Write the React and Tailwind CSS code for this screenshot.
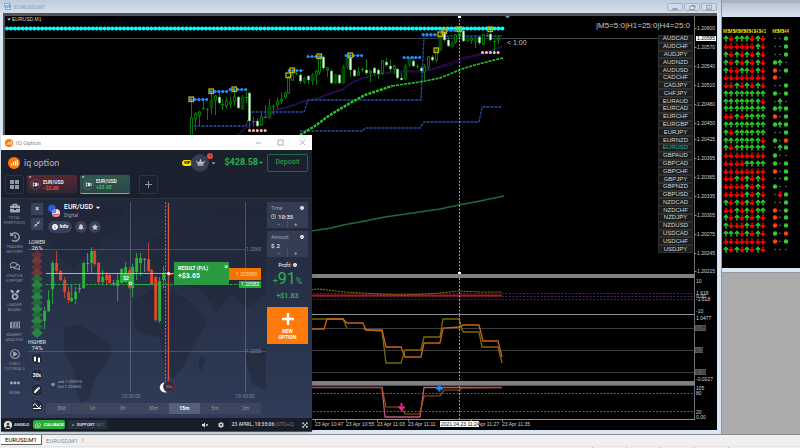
import React from 'react';
import {
  FaBriefcase, FaHistory, FaRegComments, FaMedal, FaRegNewspaper, FaRegPlayCircle, FaEllipsisH,
  FaBell, FaStar, FaCrown, FaCaretDown, FaPen, FaCog, FaVolumeMute, FaWhatsapp, FaInfoCircle, FaRegClock, FaExpandArrowsAlt,
} from 'react-icons/fa';

const PAIRS = [
  ['AUDCAD', 'UDUUUDUD', '..g'], ['AUDCHF', 'DDDDDDUD', '..g'], ['AUDJPY', 'UDUDUDUD', '..g'],
  ['AUDNZD', 'UDUDUDUD', 'gU.'], ['AUDUSD', 'UDDUUDUD', 'o.g'], ['CADCHF', 'DDDDDDDD', 'o. '],
  ['CADJPY', 'DDUDUDUD', '..g'], ['CHFJPY', 'UUUUUUUU', 'g.g'], ['EURAUD', 'UUUUUUUD', '.U.'],
  ['EURCAD', 'UUUUUUUU', 'gUg'], ['EURCHF', 'DDUDUUUU', 'o.g'], ['EURGBP', 'UUUUUUUU', 'gUg'],
  ['EURJPY', 'UDUUUUUU', '..g'], ['EURNZD', 'UUUUUUUD', 'g.o'], ['EURUSD', 'UDUUUUUU', '.Ug'],
  ['GBPAUD', 'DDDDDDDD', 'g..'], ['GBPCAD', 'DDDDUUUU', 'g.g'], ['GBPCHF', 'DDDDDDDD', 'o.g'],
  ['GBPJPY', 'DDUDUDUD', '..g'], ['GBPNZD', 'DDDDUDUD', 'g..'], ['GBPUSD', 'DDDDUDUD', '.Dg'],
  ['NZDCAD', 'UDUDUDUU', '..g'], ['NZDCHF', 'DDUDUDUU', 'o.g'], ['NZDJPY', 'UDUDUDUD', 'o.g'],
  ['NZDUSD', 'UDDDUDUD', 'o.g'], ['USDCAD', 'UUUDUDUD', 'g.o'], ['USDCHF', 'DDDDDDDD', 'o.g'],
  ['USDJPY', 'UDUDUDUD', '...'],
];

/* [x, body top, body bottom, wick top, wick bottom, kind]; w = bear, h = hollow bull, d = dark bull, t = doji */
const CANDLES = [
  [191, 118, 137, 100, 137, 'h'], [195, 114, 119, 112, 130, 'h'], [199, 112, 115, 111, 126, 'h'], [203, 108, 108, 100, 110, 't'],
  [207, 109, 109, 108, 120, 't'], [211, 100, 108, 92, 114, 'd'], [215, 96, 100, 95, 115, 'h'], [219, 97, 103, 93, 104, 'w'],
  [222, 104, 104, 99, 110, 't'], [226, 101, 106, 97, 109, 'h'], [230, 102, 104, 97, 108, 'h'], [234, 97, 101, 90, 106, 'h'],
  [238, 97, 108, 96, 109, 'w'], [242, 97, 109, 95, 110, 'd'], [246, 97, 97, 92, 103, 't'], [249, 93, 121, 92, 130, 'w'],
  [253, 121, 121, 117, 127, 't'], [257, 121, 126, 118, 127, 'w'], [261, 117, 125, 113, 126, 'h'], [265, 117, 117, 105, 117, 't'],
  [269, 106, 118, 99, 119, 'd'], [273, 106, 106, 105, 115, 't'], [277, 101, 105, 97, 109, 'h'], [281, 99, 101, 92, 104, 'h'],
  [285, 93, 97, 92, 99, 'h'], [288, 78, 93, 76, 94, 'h'], [292, 75, 80, 71, 81, 'h'], [296, 73, 73, 72, 75, 't'],
  [300, 75, 81, 73, 84, 'w'], [304, 78, 82, 77, 84, 'd'], [308, 76, 80, 75, 84, 'w'], [312, 75, 81, 73, 85, 'd'],
  [316, 71, 75, 70, 85, 'h'], [319, 57, 72, 55, 75, 'h'], [323, 57, 68, 56, 70, 'w'], [327, 68, 70, 67, 77, 'h'],
  [331, 71, 83, 69, 84, 'w'], [335, 75, 83, 74, 84, 'd'], [339, 75, 83, 74, 84, 'w'], [343, 67, 83, 65, 84, 'd'],
  [347, 58, 67, 56, 69, 'd'], [350, 58, 70, 55, 77, 'w'], [354, 70, 76, 69, 77, 'w'], [358, 72, 75, 67, 76, 'h'],
  [362, 69, 69, 67, 72, 't'], [366, 70, 73, 59, 75, 'w'], [370, 71, 73, 70, 82, 'h'], [374, 68, 73, 67, 75, 'w'],
  [378, 70, 74, 68, 79, 'w'], [382, 61, 73, 60, 75, 'h'], [386, 62, 65, 58, 67, 'w'], [390, 66, 69, 60, 72, 'w'],
  [394, 66, 69, 65, 74, 'h'], [397, 69, 78, 68, 79, 'w'], [401, 78, 80, 73, 80, 'w'], [405, 66, 79, 64, 80, 'd'],
  [409, 59, 65, 57, 67, 'd'], [413, 61, 66, 56, 67, 'w'], [417, 66, 66, 64, 69, 't'], [421, 68, 71, 66, 73, 'w'],
  [424, 67, 72, 64, 81, 'h'], [428, 57, 67, 56, 70, 'h'], [432, 57, 60, 55, 62, 'w'], [436, 50, 60, 48, 62, 'h'],
  [440, 35, 50, 33, 51, 'd'], [444, 32, 40, 31, 42, 'w'], [448, 40, 46, 37, 47, 'w'], [452, 43, 46, 41, 47, 'd'],
  [455, 35, 42, 34, 44, 'h'], [459, 30, 36, 29, 41, 'h'], [463, 31, 41, 30, 42, 'w'], [467, 38, 41, 36, 42, 'd'],
  [471, 38, 40, 37, 44, 'h'], [475, 38, 42, 36, 48, 'd'], [479, 37, 43, 36, 45, 'w'], [483, 35, 44, 34, 45, 'h'],
  [487, 35, 35, 33, 37, 't'], [490, 34, 40, 29, 41, 'w'], [494, 41, 41, 38, 52, 't'], [498, 38, 40, 36, 44, 'h'],
];

const DOT_RUNS = [
  [191, 207, 99], [211, 227, 91], [230, 246, 89], [289, 304, 70], [308, 323, 56],
  [346, 362, 55], [404, 421, 57], [423, 438, 34], [443, 458, 30],
];
const SQUARES = [[191, 99], [211, 91], [234, 89], [288, 75], [292, 70], [319, 56], [350, 55], [436, 50], [440, 34], [444, 31], [459, 29], [490, 29]];

const PRICES = [
  ['1.20600', 28], ['1.20570', 47], ['1.20540', 66], ['1.20510', 85], ['1.20480', 104], ['1.20450', 123], ['1.20425', 139],
  ['1.20395', 158], ['1.20365', 177], ['1.20335', 196], ['1.20305', 215], ['1.20275', 234], ['1.20245', 253], ['1.20215', 271],
];

function Candle({ c }) {
  const [x, t, b, wt, wb, k] = c;
  return (
    <g>
      <path d={`M${x + 0.5} ${wt}V${wb}`} stroke="#007d00" strokeWidth="1" />
      {k === 'w' && <rect x={x - 0.8} y={t} width="2.6" height={b - t} fill="#eafbea" stroke="#1d7a1d" strokeWidth="0.4" />}
      {k === 'h' && <rect x={x - 0.6} y={t} width="2.2" height={b - t} fill="#000" stroke="#008a00" strokeWidth="0.9" />}
      {k === 'd' && <rect x={x - 1} y={t} width="3" height={b - t} fill="#024802" stroke="#006000" strokeWidth="0.6" />}
      {k === 't' && <rect x={x - 0.8} y={t} width="2.6" height="1" fill="#00a000" />}
    </g>
  );
}

function Crosshair({ from, to }) {
  return <path d={`M459.5 ${from}V${to}`} stroke="#a0a0a0" strokeWidth="1" strokeDasharray="2 1.5" />;
}

function PriceChart() {
  const upper = '194,126 246,126 251,112 304,112 308,100 421,100 424,36 502,36';
  const lower = '300,131 363,131 365,128 420,128 424,122 479,122 482,107 502,107';
  return (
    <svg className="h-full w-full" viewBox="5 16 690 258" preserveAspectRatio="xMinYMin slice" fill="none">
      <path d="M5 38.5H658" stroke="#3c474d" />
      <polyline points="237,135 250,124 265,117 278,109 290,106 303,101 318,98 330,93 343,89 352,82 365,77 378,74 392,72 405,71 422,71 435,68 450,63 462,58 480,54 492,50 502,46" stroke="#4a0a44" />
      <polyline points="237,136 250,125 265,118 278,110 290,107 303,102 318,99 330,94 343,90 352,83 365,78 378,75 392,73 405,72 422,72 435,69 450,65 462,60 480,55 492,51 502,47" stroke="#10107a" />
      {[upper, lower].map((p) => (
        <g key={p}>
          <polyline points={p} stroke="#162e66" />
          <polyline points={p} stroke="#264c9c" strokeWidth="1.4" strokeDasharray="2 2" />
        </g>
      ))}
      <polyline points="300,135 315,126 327,117 340,109 352,102 365,95 380,90 392,86" stroke="#2cc42c" strokeWidth="2.4" strokeDasharray="3 1" />
      <polyline points="392,86 405,84 420,82 430,80 440,78 450,74 462,69 475,65 490,61 503,58" stroke="#2cc42c" strokeWidth="1.6" strokeDasharray="3 1" />
      <polyline points="311,231 331,228 343,225 360,222 385,217 440,209 459,205 480,201 504,196" stroke="#1d6b3e" strokeWidth="1.3" />
      {CANDLES.map((c) => <Candle key={c[0]} c={c} />)}
      <path d="M6 28.5H503" stroke="#00b4b4" strokeWidth="1.5" />
      <path d="M7 28.5H503" stroke="#00ffff" strokeWidth="4" strokeLinecap="round" strokeDasharray="0.1 3.8" />
      {DOT_RUNS.map(([a, b, y]) => (
        <g key={a}>
          <path d={`M${a} ${y + 0.5}H${b}`} stroke="#12508c" />
          <path d={`M${a} ${y + 0.5}H${b}`} stroke="#1e90ff" strokeWidth="3" strokeLinecap="round" strokeDasharray="0.1 3.8" />
        </g>
      ))}
      <path d="M249.500 130.500H266M482.500 52.500H500" stroke="#ffb6b6" strokeWidth="3" strokeLinecap="round" strokeDasharray="0.1 3.8" />
      {SQUARES.map(([x, y]) => <rect key={x} x={x - 2} y={y - 2} width="4.500" height="4.500" stroke="#c8b400" strokeWidth="1.300" />)}
      <Crosshair from={16} to={274} />
      <path d="M458 16h3v2h-3zM458 272h3v2h-3z" fill="#fff" />
      <path d="M505 16h5l-2.500 2.500z" fill="#8090a0" />
      <path d="M7 18.500h4l-2 2z" fill="#d0d0d0" />
      <text x="12" y="21" fontSize="5" fill="#d8d8d8">EURUSD,M1</text>
      <text x="507" y="45" fontSize="7" fill="#c0c0c0">&lt; 1:00</text>
      <text x="690" y="28" fontSize="8" textAnchor="end" fill="#c8c8c8">|M5=5:0|H1=25:0|H4=25:0</text>
    </svg>
  );
}

function Scale({ top, height, labels, boxes = [], current }) {
  return (
    <svg className="h-full w-[23px] shrink-0" viewBox={`694 ${top} 23 ${height}`} fontSize="5" fill="#d0d0d0">
      <path d={`M694.500 ${top}V${top + height}`} stroke="#707070" />
      {boxes.map(([t, y, w]) => (
        <g key={y}>
          <rect x="695" y={y - 3} width={w} height="6" fill="#5a5a5a" />
          <text x="696" y={y + 2} fill="#1a1a1a">{t}</text>
        </g>
      ))}
      {labels.map(([t, y]) => (
        <g key={y}>
          {top === 16 && <path d={`M695 ${y + 0.5}h1.500`} stroke="#909090" />}
          <text x={top === 16 ? 697 : 696} y={y + 2}>{t}</text>
        </g>
      ))}
      {current && (
        <g>
          <rect x="696" y="36" width="20" height="5" fill="#fff" />
          <text x="697" y="40" fill="#000">1.20585</text>
        </g>
      )}
    </svg>
  );
}

function TrendChart() {
  return (
    <svg className="h-full w-full" viewBox="5 278 690 36" preserveAspectRatio="xMinYMin slice" fill="none">
      <path d="M5 293.500H695M5 296.500H695M5 299.500H695" stroke="#4a2058" strokeDasharray="2 1.500" />
      <path d="M311 295.500H502" stroke="#a81428" strokeWidth="2" />
      <polyline points="311,290 318,289 327,290 345,292 360,293 380,294 400,295 425,294 440,293 459,291 480,292 502,292" stroke="#8c8200" strokeDasharray="2 1" />
      <Crosshair from={278} to={314} />
    </svg>
  );
}

function StochChart() {
  return (
    <svg className="h-full w-full" viewBox="5 315 690 66" preserveAspectRatio="xMinYMin slice" fill="none">
      <path d="M5 328.500H695M5 350.500H695M5 372.500H695" stroke="#3c3c3c" />
      <polyline points="311,319 343,319 347,328" stroke="#7d6a00" strokeWidth="1.300" />
      <polyline points="363,328 366,330 382,331 386,363 401,363 405,350 421,350 424,337 440,337 443,319 459,319 463,332 479,332 482,347 498,347 502,363" stroke="#7d6a00" strokeWidth="1.300" />
      <polyline points="311,329 324,329 327,319 343,319 347,323 363,323 366,330 382,330 386,347 401,347 405,357 421,357 424,343 440,343 443,328 460,327 463,325 479,325 483,341 498,341 502,357" stroke="#c8641a" strokeWidth="1.300" />
      <Crosshair from={315} to={381} />
    </svg>
  );
}

function SignalChart() {
  return (
    <svg className="h-full w-full" viewBox="5 386 690 33" preserveAspectRatio="xMinYMin slice" fill="none">
      <path d="M5 393.500H695M5 411.500H695" stroke="#606060" strokeDasharray="2 1.500" />
      <polyline points="311,387.500 382,387.500 385,417 420,417 424,387.500 502,387.500" stroke="#c05878" strokeWidth="1.300" />
      <polyline points="311,387.500 382,387.500 386,407 401,407 405,414 420,414 424,396 440,396 444,390 459,390 462,388 502,387.500" stroke="#a0560c" strokeWidth="1.200" />
      <path d="M401.500 403v7M398.500 406.500l3 3 3-3" stroke="#ff1493" strokeWidth="2" />
      <path d="M439.500 391.500v-4M436.500 389.500l3-3 3 3" stroke="#1e90ff" strokeWidth="2" />
      <Crosshair from={386} to={419} />
    </svg>
  );
}

function TimeAxis() {
  const ticks = [[315, '23 Apr 10:47'], [346, '23 Apr 10:55'], [377, '23 Apr 11:03'], [408, '23 Apr 11:11'], [471, '23 Apr 11:27'], [502, '23 Apr 11:35']];
  return (
    <svg className="h-full w-full" viewBox="5 420 690 10" preserveAspectRatio="xMinYMin slice" fontSize="5" fill="#d0d0d0">
      {ticks.map(([x, t]) => (
        <g key={x}>
          <path d={`M${x + 0.5} 420v1.500`} stroke="#909090" />
          <text x={x} y="426">{t}</text>
        </g>
      ))}
      <rect x="440" y="421" width="39" height="6" fill="#fff" />
      <text x="441" y="426" fill="#101010">2021.04.23 11:24</text>
    </svg>
  );
}

function WindowControls() {
  const shapes = ['M3 6h6v1H3z', 'M3 3h6v4H3zM5 2h5v3', 'M3 2h6v5H3zM5 4l2 2M7 4l-2 2'];
  return (
    <div className="flex gap-px">
      {shapes.map((d, i) => (
        <button key={d} aria-label={['Minimize', 'Restore', 'Close'][i]} className="h-2 w-4 rounded-xs border border-[#a3b2c2] bg-[#cfdce8]">
          <svg className="mx-auto h-[7px] w-3" viewBox="0 0 12 9" fill="#e8eef4" stroke="#7b8794"><path d={d} /></svg>
        </button>
      ))}
    </div>
  );
}

function ChartWindow() {
  return (
    <section className="absolute inset-y-0 left-0 flex w-[722px] flex-col border-r border-[#8a97a5] bg-[#d9e6f4]">
      <header className="flex h-[13px] shrink-0 items-center gap-[3px] bg-linear-to-b from-[#bfcddb] to-[#d3e0ec] pr-1 pl-1">
        <svg className="h-[7px] w-[7px]" viewBox="0 0 8 8" fill="#e8f2ff" stroke="#5d96dd"><path d="M.5.500h6v4h-6zM2 3h5.500v4.500H2zM4 6V5M6 6V4.500" /></svg>
        <h1 className="flex-1 font-['Roboto',sans-serif] text-[6px] leading-none text-[#929ca8]">EURUSD,M1</h1>
        <WindowControls />
      </header>
      <div className="mr-1 mb-1 ml-[3px] flex min-h-0 flex-1 flex-col border-t-3 border-l-2 border-[#555] bg-black">
        <div className="relative flex h-[258px] shrink-0">
          <div className="min-w-0 flex-1"><PriceChart /></div>
          <div className="absolute top-[19px] right-[24px] grid h-[218px] w-[35px] auto-rows-fr">
            {PAIRS.map(([p]) => (
              <button key={p} className={'border border-[#303030] bg-[#1c1c1c] text-[6px] leading-[5px] ' + (p === 'EURUSD' ? 'text-[#18b8b0]' : 'text-[#d4d4d4]')}>{p}</button>
            ))}
          </div>
          <Scale top={16} height={258} labels={PRICES} current />
        </div>
        <div className="mr-[22px] h-1 shrink-0 bg-[#808080]" />
        <div className="flex h-9 shrink-0">
          <div className="min-w-0 flex-1"><TrendChart /></div>
          <Scale top={278} height={36} labels={[['10', 281], ['1.618', 293], ['0.00', 296], ['-1.618', 299], ['-10', 311]]} />
        </div>
        <div className="mr-[22px] h-px shrink-0 bg-[#909090]" />
        <div className="flex h-[66px] shrink-0">
          <div className="min-w-0 flex-1"><StochChart /></div>
          <Scale top={315} height={66} labels={[['1.0477', 318], ['-0.0027', 379]]} boxes={[['0.85', 328, 11], ['0.5', 350, 8], ['0.15', 372, 11]]} />
        </div>
        <div className="mr-[22px] h-[5px] shrink-0 border-b border-[#555] bg-[#808080]" />
        <div className="flex h-[33px] shrink-0">
          <div className="min-w-0 flex-1"><SignalChart /></div>
          <Scale top={386} height={33} labels={[['105', 388], ['80', 393], ['20', 412], ['0.00', 417]]} />
        </div>
        <div className="mr-[22px] h-px shrink-0 bg-[#909090]" />
        <div className="mr-[22px] min-h-0 flex-1"><TimeAxis /></div>
      </div>
    </section>
  );
}

function Mark({ k }) {
  const arrow = 'M3 7.500V1.500M.500 4.200L3 1.500l2.500 2.700';
  return (
    <svg className="mx-auto h-[7px] w-[6px]" viewBox="0 0 6 8" fill="none" strokeWidth="1.700">
      {k === 'U' && <path d={arrow} stroke="#28c828" />}
      {k === 'D' && <path d={arrow} stroke="#ff0000" transform="rotate(180 3 4)" />}
      {k === 'g' && <circle cx="3" cy="4" r="2.500" fill="#32cd32" />}
      {k === 'o' && <circle cx="3" cy="4" r="2.500" fill="#ff4500" />}
      {k === '.' && <circle cx="3" cy="4" r="0.900" fill="#808080" />}
    </svg>
  );
}

function SignalColumns() {
  return (
    <colgroup>
      {Array.from({ length: 8 }, (_, i) => <col key={i} />)}
      <col className="w-[7px]" />
      <col /><col /><col />
    </colgroup>
  );
}

function SignalsWindow() {
  return (
    <section className="absolute top-0 right-0 left-[722px] flex h-[273px] flex-col border-b border-[#8f9aa5] bg-[#d9e6f4] pb-1">
      <header className="h-[17px] shrink-0 border-t-3 border-[#a9b4bf] bg-linear-to-b from-[#b9c7d5] to-[#d6e2ee]" />
      <div className="min-h-0 flex-1 bg-black pt-[10px] pl-px">
        <table className="w-[65px] table-fixed border-collapse">
          <SignalColumns />
          <thead>
            <tr className="h-2 text-[5px] leading-[8px] text-[#d8d000]">
              {['M5', 'M5', 'M5', 'M5', 'M5', 'H1', 'H1', 'H1', '', 'M5', 'M5', 'H4'].map((h, i) => (
                <th key={i} className="p-0 font-bold whitespace-nowrap">{h}</th>
              ))}
            </tr>
          </thead>
        </table>
        <table className="h-[218px] w-[65px] table-fixed border-collapse">
          <SignalColumns />
          <tbody>
            {PAIRS.map(([p, arrows, dots]) => (
              <tr key={p}>
                {(arrows + ' ' + dots).split('').map((k, i) => <td key={i} className="p-0"><Mark k={k} /></td>)}
              </tr>
            ))}
          </tbody>
        </table>
      </div>
    </section>
  );
}

function IqLogo({ className }) {
  return (
    <svg className={className} viewBox="0 0 24 24">
      <circle cx="12" cy="12" r="12" fill="#ff7a0c" />
      <path d="M7 17v-4M11 17v-7M15 17V8M18.500 17V6" stroke="#fff" strokeWidth="2.400" />
    </svg>
  );
}

function PositionTab({ amount, up }) {
  return (
    <button className={'relative flex h-[19px] w-[50px] items-center gap-[2px] rounded-xs pl-[3px] text-left ' + (up ? 'border-b border-[#ff8a1c] bg-linear-to-b from-[#31584f] to-[#2b4546]' : 'bg-linear-to-b from-[#5a2833] to-[#2b2531]')}>
      <svg className="h-[11px] w-[11px] shrink-0" viewBox="0 0 22 22" fill="none" stroke="#98a0a8">
        <circle cx="11" cy="11" r="10" strokeOpacity=".6" />
        <path d="M5.500 8h3l-2 3 2 3h-3M11 8h2v6h-2zM16 8v6" stroke="#fff" strokeWidth="1.700" />
      </svg>
      <span className="absolute top-0 left-[2px] text-[4px] leading-[4px] text-white">×</span>
      <span className="text-[5px] leading-[6px] font-bold text-[#e4e6ea]">
        EUR/USD
        <span className={'block ' + (up ? 'text-[#2fc45a]' : 'text-[#ee4a4a]')}>{amount}</span>
      </span>
    </button>
  );
}

const NAV = [
  [FaBriefcase, 'TOTAL PORTFOLIO'], [FaHistory, 'TRADING HISTORY'], [FaRegComments, 'CHATS & SUPPORT'], [FaMedal, 'LEADER BOARD'],
  [FaRegNewspaper, 'MARKET ANALYSIS'], [FaRegPlayCircle, 'VIDEO TUTORIALS'], [FaEllipsisH, 'MORE'],
];

/* [x, body top, body bottom, wick top, wick bottom, g | r | n] */
const IQ_CANDLES = [
  [44, 311, 321, 307, 329, 'g'], [48, 300, 311, 290, 312, 'g'], [52, 263, 289, 261, 304, 'g'], [56, 263, 271, 251, 273, 'r'],
  [60, 271, 280, 270, 281, 'r'], [64, 280, 292, 277, 298, 'r'], [68, 292, 300, 287, 303, 'r'], [71, 298, 301, 285, 302, 'g'],
  [75, 292, 299, 287, 304, 'g'], [79, 288, 289, 284, 293, 'n'], [83, 263, 288, 262, 289, 'g'], [87, 263, 264, 253, 272, 'n'],
  [91, 251, 263, 247, 273, 'g'], [94, 251, 264, 250, 266, 'r'], [98, 263, 282, 262, 284, 'r'], [102, 277, 282, 270, 284, 'g'],
  [106, 275, 280, 272, 284, 'r'], [109, 275, 283, 274, 284, 'r'], [113, 283, 284, 280, 286, 'n'], [117, 280, 286, 274, 301, 'g'],
  [121, 269, 283, 268, 284, 'g'], [125, 267, 278, 262, 280, 'g'], [129, 270, 288, 267, 289, 'r'], [132, 267, 288, 264, 297, 'g'],
  [136, 258, 272, 253, 280, 'g'], [140, 258, 263, 253, 276, 'g'], [144, 259, 260, 258, 272, 'n'], [148, 259, 271, 243, 272, 'r'],
  [151, 270, 284, 269, 285, 'r'], [155, 277, 320, 276, 322, 'r'], [159, 281, 321, 277, 323, 'g'], [163, 273, 280, 266, 288, 'g'],
];

function IqChart() {
  const color = { g: '#2cb040', r: '#e0452e', n: '#7e8796' };
  return (
    <svg className="absolute inset-0 h-full w-full" viewBox="28 199 238 219" preserveAspectRatio="xMinYMin slice" fill="none" fontSize="5">
      <g fill="#1d2536" fillOpacity=".5">
        <path d="M46 232l20-20 34-8 24 6-6 18-14 8-8 16-12 4-10 12-8-4-12-16z" />
        <path d="M64 327l18-2 14 10 14 8 2 8-7 14-10 14-6 20-8 3-5-12-2-20-10-18z" />
        <path d="M134 300l16-10 24 2 22 14 12 18-6 8-10 16-8 18-10 12-8-4-4-20-2-16-22-6-6-18z" />
        <path d="M142 262l12-24 28-18 40-16h44v90l-20 14-14-14-16 18-14-22-26-8-22-8z" />
        <path d="M200 356l6 2-4 12-4-2z" />
        <path d="M246 360v-10l20-2v42l-14-6z" />
      </g>
      <path d="M28 249.500H245M28 351.500H266" stroke="#8c95a6" strokeOpacity=".35" />
      <path d="M130.500 202V392M245.500 202V392" stroke="#a0a8b8" strokeOpacity=".35" />
      <path d="M165.500 202V388" stroke="#b8bec8" strokeOpacity=".6" strokeDasharray="2 1.500" />
      <path d="M46 284.500H262" stroke="#2bad40" strokeDasharray="2.500 1.500" />
      <path d="M130 284.500H158" stroke="#2bad40" />
      {IQ_CANDLES.map(([x, t, b, wt, wb, k]) => (
        <g key={x} fill={color[k]}>
          <rect x={x + 0.2} y={wt} width="0.900" height={wb - wt} />
          <rect x={x - 0.8} y={t} width="2.900" height={b - t} />
        </g>
      ))}
      <path d="M46 273.500H174" stroke="#c4c8d0" strokeOpacity=".85" />
      <path d="M168.500 203V383" stroke="#e2503c" strokeWidth="1.300" />
      <circle cx="168.500" cy="273.500" r="1.600" fill="#fff" />
      <path d="M170 272.500l3 1.500-3 1.500z" fill="#ff6a20" />
      <circle cx="169" cy="386.500" r="5.500" fill="#2a2f42" stroke="#703038" strokeWidth=".8" />
      <text x="169" y="388" textAnchor="middle" fontSize="4" fontWeight="700" fill="#f04a38">30s</text>
      <path d="M164.500 382.500a5 5 0 1 0 2.500 9.500a6 6 0 0 1-2.500-9.500z" fill="#fff" />
      <path d="M120 274h12v8h-5l-1 2-1-2h-5z" fill="#2bad40" />
      <text x="126" y="280" textAnchor="middle" fontWeight="700" fill="#fff">$2</text>
      <circle cx="130.500" cy="283.500" r="2.300" fill="#d8e8dc" stroke="#2bad40" strokeWidth=".8" />
      <circle cx="130.500" cy="283.500" r=".8" fill="#2bad40" />
      <text x="246" y="251" fill="#7b8496">1.2060</text>
      <text x="246" y="353" fill="#7b8496">1.2055</text>
      <g fill="#7b8496" textAnchor="middle">
        <text x="131" y="398">10:30:00</text>
        <text x="245" y="398">10:45:00</text>
      </g>
      <rect x="229" y="268" width="32" height="12" fill="#f57400" />
      <text x="236" y="276" fill="#ffd6a8">1.205880</text>
      <rect x="239" y="281" width="22" height="7" fill="#24a83c" />
      <text x="241" y="286" fill="#fff">1.20583</text>
      <circle cx="53" cy="384.500" r="1.800" fill="#8790a0" />
      <g fontSize="4" fill="#a2a9b6">
        <text x="58" y="383">ask 1.205910</text>
        <text x="58" y="388">bid 1.205850</text>
      </g>
    </svg>
  );
}

function Sentiment() {
  return (
    <svg className="h-[88px] w-[14px] shrink-0" viewBox="0 0 14 88">
      {Array.from({ length: 14 }, (_, i) => {
        const y = i * 6;
        return <path key={i} d={`M7 ${y}l6 5-6 5-6-5z`} fill={i < 4 ? (i % 2 ? '#7a3a3c' : '#693236') : (i % 2 ? '#2a8c42' : '#256f3c')} fillOpacity=".9" />;
      })}
    </svg>
  );
}

function ToolColumn() {
  const round = 'grid h-[14px] w-[14px] place-items-center rounded-full border border-[#3d4860] bg-[#232c3f] text-white';
  return (
    <div className="flex w-[18px] shrink-0 flex-col items-center pt-1 text-center text-[5px] leading-[6px] text-[#e6e8ec]">
      <button aria-label="Close chart" className="grid h-3 w-3 place-items-center bg-[#39425a] text-[7px] font-bold">×</button>
      <button aria-label="Collapse chart" className="mt-[3px] grid h-3 w-3 place-items-center bg-[#39425a]">
        <svg className="h-[6px] w-[6px]" viewBox="0 0 6 6" fill="none" stroke="#d0d4dc" strokeWidth=".8"><path d="M6 0L3.500 2.500M3.500.8v1.700h1.700M0 6l2.500-2.500M.8 3.500h1.700v1.700" /></svg>
      </button>
      <span className="mt-[9px]">LOWER</span>
      <span className="text-[6px]">26%</span>
      <div className="-mt-px"><Sentiment /></div>
      <span className="mt-px">HIGHER</span>
      <span className="text-[6px]">74%</span>
      <div className="mt-px flex h-[61px] shrink-0 flex-col justify-between">
        <button aria-label="Chart type" className={round}>
          <svg className="h-2 w-2" viewBox="0 0 8 8" fill="#fff"><path d="M1 2h2v4H1zM1.700 1h.6v6h-.6zM5 3h2v4H5zM5.700 2h.6v6h-.6z" /></svg>
        </button>
        <button className={round + ' text-[5px] font-bold'}>30s</button>
        <button aria-label="Draw" className={round}><FaPen className="h-[6px] w-[6px]" /></button>
        <button aria-label="Indicators" className={round}>
          <svg className="h-2 w-2" viewBox="0 0 8 8" fill="none" stroke="#fff"><path d="M0 4c1-3 2-3 4 0s3 2 4-1M0 6.500h8" /></svg>
        </button>
      </div>
    </div>
  );
}

function AssetHeader() {
  return (
    <div className="flex flex-col gap-[3px] pt-1 pl-[2px]">
      <div className="flex items-center gap-1">
        <svg className="h-[13px] w-[12px]" viewBox="0 0 24 26">
          <circle cx="8" cy="9" r="8" fill="#2350c8" /><circle cx="8" cy="9" r="4" fill="none" stroke="#4c78e8" strokeWidth="1.500" />
          <circle cx="16" cy="18" r="8" fill="#f0d8dc" /><path d="M9 21h14M10 24h11" stroke="#e05060" strokeWidth="2" /><path d="M16 10a8 8 0 0 0-8 8h8z" fill="#4a90f0" />
        </svg>
        <div>
          <button className="flex items-center gap-[2px] text-[7px] leading-[9px] font-medium text-white">EUR/USD <FaCaretDown className="h-[7px] w-[6px]" /></button>
          <p className="text-[5px] leading-[6px] text-[#9aa2b2]">Digital</p>
        </div>
      </div>
      <div className="flex items-center gap-[2px] text-[#c9ced8]">
        <button className="flex h-3 w-6 items-center justify-center gap-[2px] rounded-full bg-[#39425a] text-[5px] font-bold text-white"><FaInfoCircle className="h-[6px] w-[6px]" />Info</button>
        <button aria-label="Alerts" className="ml-px grid h-3 w-3 place-items-center rounded-full bg-[#39425a]"><FaBell className="h-[6px] w-[6px]" /></button>
        <button aria-label="Favorite" className="grid h-3 w-3 place-items-center rounded-full bg-[#39425a]"><FaStar className="h-[6px] w-[6px]" /></button>
      </div>
    </div>
  );
}

function Field({ id, label, value, clock }) {
  return (
    <div className="flex h-[26px] flex-col bg-[#343d53] px-1 pt-[3px] text-[5px] leading-[6px]">
      <div className="flex items-center justify-between text-[#9aa2b2]"><label htmlFor={id}>{label}</label><FaInfoCircle className="h-1 w-1 text-white" /></div>
      <div className="mt-[2px] flex items-center gap-[2px] text-[6px] leading-[7px] font-medium text-[#e8eaee]">
        {clock ? <FaRegClock className="h-[5px] w-[5px] shrink-0" /> : <span>$</span>}
        <input id={id} defaultValue={value} className="h-[7px] w-full min-w-0 bg-transparent" />
      </div>
      <div className="grid flex-1 grid-cols-2 divide-x divide-[#4a5368] text-center text-[#c0c6d2]">
        <button aria-label={'Decrease ' + label}>−</button>
        <button aria-label={'Increase ' + label}>+</button>
      </div>
    </div>
  );
}

function IqWindow() {
  return (
    <section className="absolute top-[135px] left-px flex h-[297px] w-[311px] flex-col border-b border-[#4a5464] bg-[#1a202d] font-['Roboto',sans-serif] shadow-md">
      <header className="flex h-[15px] shrink-0 items-center gap-[3px] bg-white pr-[6px] pl-1">
        <IqLogo className="h-2 w-2" />
        <h2 className="flex-1 text-[6px] leading-none text-[#8a8a8a]">IQ Option</h2>
        <div className="flex gap-[15px]">
          {['M1 4h5', 'M1 1h5v5H1z', 'M1 1l5 5M6 1L1 6'].map((d, i) => (
            <button key={d} aria-label={['Minimize', 'Maximize', 'Close'][i]}><svg className="h-[7px] w-[7px]" viewBox="0 0 7 7" fill="none" stroke="#9a9a9a" strokeWidth=".8"><path d={d} /></svg></button>
          ))}
        </div>
      </header>
      <div className="flex h-[25px] shrink-0 items-center pr-1 pl-[7px]">
        <IqLogo className="h-3 w-3" />
        <span className="ml-1 flex-1 font-['Lato',sans-serif] text-[9px] leading-none text-[#b4b8c0]">iq option</span>
        <span className="rounded-full bg-[#ffe100] px-[2px] text-[4px] leading-[6px] font-black text-black">VIP</span>
        <button aria-label="Account" className="relative -ml-px grid h-[18px] w-[18px] place-items-center rounded-full bg-[#363f52] text-[#b8bcc6]">
          <FaCrown className="h-[9px] w-[9px]" />
          <span className="absolute -top-px -right-1 h-[6px] w-[6px] rounded-full bg-[#e84a34] text-[4px] leading-[6px] text-black">1</span>
        </button>
        <FaCaretDown className="ml-[2px] h-[6px] w-[5px] text-[#9aa0ac]" />
        <button className="ml-2 flex items-center gap-px text-[9px] leading-none font-bold text-[#2db14c]">$428.58 <FaCaretDown className="h-[7px] w-[4px]" /></button>
        <button className="ml-1 h-[18px] w-[41px] rounded-xs border border-[#1f6a38] text-[7px] leading-none font-medium text-[#2a9a48]">Deposit</button>
      </div>
      <div className="flex h-[24px] shrink-0 items-start gap-[3px] border-b border-[#2a3242] pl-1">
        <button aria-label="Layout" className="grid h-[19px] w-[19px] place-items-center rounded-xs border border-[#2c3443]">
          <svg className="h-[9px] w-[9px]" viewBox="0 0 9 9" fill="#9098a6"><path d="M0 0h4v4H0zM5 0h4v4H5zM0 5h4v4H0zM5 5h4v4H5z" /></svg>
        </button>
        <PositionTab amount="−$2.00" />
        <PositionTab amount="+$3.65" up />
        <button aria-label="Add tab" className="ml-[6px] grid h-[19px] w-[19px] place-items-center rounded-xs border border-[#2c3443] text-[#9098a6]">
          <svg className="h-[7px] w-[7px]" viewBox="0 0 7 7" stroke="currentColor"><path d="M3.500 0v7M0 3.500h7" /></svg>
        </button>
      </div>
      <div className="flex min-h-0 flex-1 bg-linear-to-b from-[#20283a] to-[#2f3b58]">
        <nav className="grid h-[208px] w-[27px] shrink-0 auto-rows-fr pt-1">
          {NAV.map(([Icon, label]) => (
            <a key={label} href="#" className="flex flex-col items-center gap-[2px] text-center text-[4px] leading-[5px] text-[#8890a0]">
              <Icon className="h-[10px] w-[10px] text-[#a2a9b6]" />
              <span className="w-6">{label}</span>
            </a>
          ))}
        </nav>
        <main className="relative flex min-w-0 flex-1">
          <IqChart />
          <div className="relative flex w-full">
            <ToolColumn />
            <div className="flex min-w-0 flex-1 flex-col justify-between pr-[5px] pb-1">
              <AssetHeader />
              <div className="flex h-[11px] bg-[#3d465c] text-[5px] text-[#8d96a6]">
                {['30d', '1d', '3h', '30m', '15m', '5m', '2m'].map((t) => (
                  <button key={t} className={'flex-1 ' + (t === '15m' ? 'bg-[#56607a] font-bold text-white' : '')}>{t}</button>
                ))}
              </div>
            </div>
          </div>
          <div className="absolute top-[63px] left-[146px] flex h-[23px] w-[55px] justify-between bg-[#2a9a42] pt-[3px] pr-px pl-1 text-white">
            <p className="text-[5px] leading-[7px] font-bold">RESULT (P/L)<span className="block text-[7px] leading-[9px]">+$3.65</span></p>
            <button aria-label="Dismiss result" className="h-1 text-[7px] leading-[4px]">×</button>
          </div>
        </main>
        <aside className="flex w-[46px] shrink-0 flex-col gap-[3px] pt-[3px] pr-1 pl-px">
          <Field id="time" label="Time" value="10:35" clock />
          <Field id="amount" label="Amount" value="2" />
          <div className="mt-[2px] text-center text-[#2db14c]">
            <p className="flex items-center justify-center gap-[2px] text-[5px] leading-[6px] text-white">Profit <FaInfoCircle className="h-1 w-1" /></p>
            <p className="mt-[2px] text-[16px] leading-[18px] whitespace-nowrap"><span className="text-[9px]">+</span>91<span className="text-[9px]">%</span></p>
            <p className="mt-[2px] text-[7px] leading-[8px] font-bold">+$1.83</p>
          </div>
          <button className="mt-1 flex h-[37px] flex-col items-center bg-[#ff7a0a] pt-[6px] text-[5px] leading-[6px] font-bold text-white">
            <svg className="mb-[3px] h-3 w-3" viewBox="0 0 12 12" stroke="#fff" strokeWidth="2.500"><path d="M6 0v12M0 6h12" /></svg>
            NEW<br />OPTION
          </button>
        </aside>
      </div>
      <footer className="flex h-[13px] shrink-0 items-center bg-[#171d29] pr-1 pl-[3px] text-[4px] leading-none font-bold text-[#d8dbe0]">
        <svg className="h-2 w-2" viewBox="0 0 8 8"><circle cx="4" cy="4" r="4" fill="#e8e8e8" /><circle cx="4" cy="3" r="1.500" fill="#5a3c30" /><path d="M1.500 7c.5-3 4.500-3 5 0z" fill="#222" /></svg>
        <span className="ml-[2px]">ANGELO</span>
        <button className="ml-1 flex h-[9px] w-8 items-center justify-center gap-[3px] rounded-xs bg-[#2cab3e] text-white"><FaWhatsapp className="h-[6px] w-[6px]" />CALLBACK</button>
        <button className="ml-[3px] flex h-[9px] w-[39px] items-center justify-center gap-[3px] bg-[#272e3d]"><span className="h-[2px] w-[2px] rounded-full bg-[#2cc04a]" /><span>SUPPORT <span className="font-normal text-[#7d8494]">24/7</span></span></button>
        <span className="flex-1" />
        <button aria-label="Mute"><FaVolumeMute className="h-[6px] w-[6px]" /></button>
        <button aria-label="Settings" className="ml-[10px]"><FaCog className="h-[6px] w-[6px]" /></button>
        <span className="ml-[7px] text-[5px] font-medium">23 APRIL, 10:35:06 <span className="font-normal text-[#7d8494]">(UTC+2)</span></span>
        <button aria-label="Full screen" className="ml-2"><FaExpandArrowsAlt className="h-[6px] w-[6px]" /></button>
      </footer>
    </section>
  );
}

export default function App() {
  return (
    <div className="flex h-screen w-full flex-col overflow-hidden bg-[#ababab] font-['Liberation_Sans',sans-serif]">
      <div className="relative min-h-0 flex-1 overflow-hidden">
        <SignalsWindow />
        <ChartWindow />
        <IqWindow />
      </div>
      <div className="flex h-3 shrink-0 items-start border-t border-[#8a8a8a] bg-[#f0f0f0] pl-px text-[6px] leading-[9px] font-['Roboto',sans-serif]">
        <button className="h-[10px] w-[41px] border-r border-b border-[#606060] bg-white text-black">EURUSD,M1</button>
        <button className="h-[10px] w-10 text-[#909090]">EURUSD,M1</button>
        <span className="text-[#707070]">|</span>
      </div>
      <div className="flex h-[2px] shrink-0 justify-end gap-[33px] border-t border-[#e4e4e4] bg-[#f0f0f0] pr-[71px]">
        {[0, 1, 2, 3, 4].map((i) => <span key={i} className="w-px bg-[#c0c0c0]" />)}
      </div>
    </div>
  );
}
